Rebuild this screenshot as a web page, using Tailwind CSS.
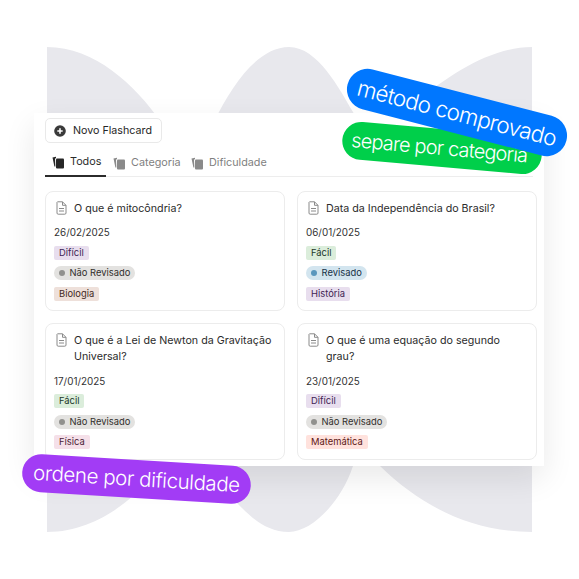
<!DOCTYPE html>
<html lang="en">
<head>
  <meta charset="UTF-8" />
  <title>Flashcards</title>
  <script src="https://cdn.jsdelivr.net/npm/@tailwindcss/browser@4"></script>
</head>
<body class="bg-white font-['Inter',sans-serif]">
  <div class="relative w-[579px] h-[579px] overflow-hidden pt-[113px] pl-[34px]">
    <!-- background shape -->
    <svg class="absolute left-0 top-0" width="579" height="579" viewBox="0 0 579 579">
      <rect x="47" y="47" width="485" height="485" fill="#e8e8ed" />
      <path fill="#ffffff" d="M47 47C95 47 135 85 161 122C172 138 180 152 188 170C194 152 203 138 214 122C232 85 258 47 289 47Z" />
      <path fill="#ffffff" d="M289 47C318 47 340 90 353 112C362 128 368 140 372 150C382 132 398 112 418 100C450 75 490 47 532 47Z" />
      <path fill="#ffffff" d="M47 532C85 532 115 512 134 495C150 482 165 462 178 440C195 462 215 482 237 503C250 516 265 532 289 532Z" />
      <path fill="#ffffff" d="M289 532C310 532 340 505 353 466C358 458 362 450 366 440C370 450 374 458 380 466C420 505 470 532 532 532Z" />
    </svg>

    <!-- panel -->
    <div class="relative w-[510px] h-[353px] bg-white shadow-[0_12px_30px_rgba(0,0,0,0.09)] px-[11px] pt-[5px]">
      <button class="flex items-center gap-[7px] w-[117px] h-[25px] pl-[8px] pt-[1px] bg-white border border-[#e9e9e9] rounded-[5px] text-[10.7px] text-[#262626]">
        <svg class="-mt-[1px]" width="12" height="12" viewBox="0 0 13 13">
          <circle cx="6.5" cy="6.5" r="6.3" fill="#3a3a3a" />
          <path d="M6.5 3.6v5.8M3.6 6.5h5.8" stroke="#fff" stroke-width="1.7" />
        </svg>
        Novo Flashcard
      </button>

      <!-- tabs -->
      <div class="flex h-[27px] mt-[7px] border-b border-[#ededed] text-[10.8px]">
        <div class="flex items-center gap-[5px] w-[61px] pl-[7px] border-b-2 border-[#2b2b2b] text-[#2b2b2b] -mb-px">
          <svg width="13" height="13" viewBox="0 0 13 13" fill="#262626">
            <path d="M0.5 1.5L4 0.8V2.2L3 2.4L3.4 10.5L2.4 10.4Z" />
            <rect x="4" y="2.5" width="8" height="10" rx="1" />
          </svg>
          Todos
        </div>
        <div class="flex items-center gap-[5px] ml-[5px] w-[80px] pl-[2px] text-[#7f7f7f]">
          <svg width="13" height="13" viewBox="0 0 13 13" fill="#8a8a8a">
            <path d="M0.5 1.5L4 0.8V2.2L3 2.4L3.4 10.5L2.4 10.4Z" />
            <rect x="4" y="2.5" width="8" height="10" rx="1" />
          </svg>
          Categoria
        </div>
        <div class="flex items-center gap-[5px] text-[#7f7f7f]">
          <svg width="13" height="13" viewBox="0 0 13 13" fill="#8a8a8a">
            <path d="M0.5 1.5L4 0.8V2.2L3 2.4L3.4 10.5L2.4 10.4Z" />
            <rect x="4" y="2.5" width="8" height="10" rx="1" />
          </svg>
          Dificuldade
        </div>
      </div>

      <!-- cards -->
      <div class="grid grid-cols-[240px_240px] gap-x-[12px] gap-y-[12px] mt-[14px]">
        <div class="h-[120px] border border-[#ececec] rounded-[8px] px-[8px] pt-[8px] bg-white">
          <div class="flex gap-[7px] text-[10.7px] leading-[16.5px] text-[#2b2b2b]">
            <svg class="shrink-0 mt-[1px] ml-[2px]" width="11" height="14" viewBox="0 0 11 14" fill="none" stroke="#8a8a8a" stroke-width="1">
              <path d="M1.5 0.8H6.5L10 4.3V12a1.2 1.2 0 0 1-1.2 1.2H2.2A1.2 1.2 0 0 1 1 12V1.3Z" />
              <path d="M6.5 0.8V4.3H10M3 7.5H8M3 10H8" />
            </svg>
            <p class="pt-[0.5px]">O que é mitocôndria?</p>
          </div>
          <p class="mt-[8px] text-[9.9px] leading-[15px] text-[#333333]">26/02/2025</p>
          <div class="flex flex-col items-start gap-[6.5px] mt-[5.5px] text-[9.4px] leading-[14px]">
            <span class="px-[5px] rounded-[2px] bg-[#e8deee] text-[#412454]">Difícil</span>
            <span class="flex items-center gap-[4.5px] px-[5px] rounded-full bg-[#e3e2e0] text-[#32302c]"><i class="w-[6px] h-[6px] rounded-full bg-[#91918e]"></i>Não Revisado</span>
            <span class="px-[5px] rounded-[2px] bg-[#eee0da] text-[#442a1e]">Biologia</span>
          </div>
        </div>

        <div class="h-[120px] border border-[#ececec] rounded-[8px] px-[8px] pt-[8px] bg-white">
          <div class="flex gap-[7px] text-[10.7px] leading-[16.5px] text-[#2b2b2b]">
            <svg class="shrink-0 mt-[1px] ml-[2px]" width="11" height="14" viewBox="0 0 11 14" fill="none" stroke="#8a8a8a" stroke-width="1">
              <path d="M1.5 0.8H6.5L10 4.3V12a1.2 1.2 0 0 1-1.2 1.2H2.2A1.2 1.2 0 0 1 1 12V1.3Z" />
              <path d="M6.5 0.8V4.3H10M3 7.5H8M3 10H8" />
            </svg>
            <p class="pt-[0.5px]">Data da Independência do Brasil?</p>
          </div>
          <p class="mt-[8px] text-[9.9px] leading-[15px] text-[#333333]">06/01/2025</p>
          <div class="flex flex-col items-start gap-[6.5px] mt-[5.5px] text-[9.4px] leading-[14px]">
            <span class="px-[5px] rounded-[2px] bg-[#dbeddb] text-[#1c3829]">Fácil</span>
            <span class="flex items-center gap-[4.5px] px-[5px] rounded-full bg-[#d3e5ef] text-[#183347]"><i class="w-[6px] h-[6px] rounded-full bg-[#5b97bd]"></i>Revisado</span>
            <span class="px-[5px] rounded-[2px] bg-[#e8deee] text-[#412454]">História</span>
          </div>
        </div>

        <div class="h-[137px] border border-[#ececec] rounded-[8px] px-[8px] pt-[8px] bg-white">
          <div class="flex gap-[7px] text-[10.7px] leading-[16.5px] text-[#2b2b2b]">
            <svg class="shrink-0 mt-[1px] ml-[2px]" width="11" height="14" viewBox="0 0 11 14" fill="none" stroke="#8a8a8a" stroke-width="1">
              <path d="M1.5 0.8H6.5L10 4.3V12a1.2 1.2 0 0 1-1.2 1.2H2.2A1.2 1.2 0 0 1 1 12V1.3Z" />
              <path d="M6.5 0.8V4.3H10M3 7.5H8M3 10H8" />
            </svg>
            <p class="pt-[0.5px]">O que é a Lei de Newton da Gravitação Universal?</p>
          </div>
          <p class="mt-[8px] text-[9.9px] leading-[15px] text-[#333333]">17/01/2025</p>
          <div class="flex flex-col items-start gap-[6.5px] mt-[5.5px] text-[9.4px] leading-[14px]">
            <span class="px-[5px] rounded-[2px] bg-[#dbeddb] text-[#1c3829]">Fácil</span>
            <span class="flex items-center gap-[4.5px] px-[5px] rounded-full bg-[#e3e2e0] text-[#32302c]"><i class="w-[6px] h-[6px] rounded-full bg-[#91918e]"></i>Não Revisado</span>
            <span class="px-[5px] rounded-[2px] bg-[#f5e0e9] text-[#4c2337]">Física</span>
          </div>
        </div>

        <div class="h-[137px] border border-[#ececec] rounded-[8px] px-[8px] pt-[8px] bg-white">
          <div class="flex gap-[7px] text-[10.7px] leading-[16.5px] text-[#2b2b2b]">
            <svg class="shrink-0 mt-[1px] ml-[2px]" width="11" height="14" viewBox="0 0 11 14" fill="none" stroke="#8a8a8a" stroke-width="1">
              <path d="M1.5 0.8H6.5L10 4.3V12a1.2 1.2 0 0 1-1.2 1.2H2.2A1.2 1.2 0 0 1 1 12V1.3Z" />
              <path d="M6.5 0.8V4.3H10M3 7.5H8M3 10H8" />
            </svg>
            <p class="pt-[0.5px]">O que é uma equação do segundo grau?</p>
          </div>
          <p class="mt-[8px] text-[9.9px] leading-[15px] text-[#333333]">23/01/2025</p>
          <div class="flex flex-col items-start gap-[6.5px] mt-[5.5px] text-[9.4px] leading-[14px]">
            <span class="px-[5px] rounded-[2px] bg-[#e8deee] text-[#412454]">Difícil</span>
            <span class="flex items-center gap-[4.5px] px-[5px] rounded-full bg-[#e3e2e0] text-[#32302c]"><i class="w-[6px] h-[6px] rounded-full bg-[#91918e]"></i>Não Revisado</span>
            <span class="px-[5px] rounded-[2px] bg-[#ffe2dd] text-[#5d1715]">Matemática</span>
          </div>
        </div>
      </div>
    </div>

    <!-- floating labels -->
    <div class="absolute left-[342px] top-[129px] w-[200px] h-[38px] rotate-[5deg] rounded-full bg-[#00cf4a] text-white text-[20px] font-[350] tracking-[-0.04em] leading-[38px] pl-[9px] whitespace-nowrap">separe por categoria</div>
    <div class="absolute left-[344px] top-[92px] w-[226px] h-[41px] rotate-[14.5deg] rounded-full bg-[#0077ff] text-white text-[22.5px] font-[350] tracking-[-0.032em] leading-[41px] text-center whitespace-nowrap">método comprovado</div>
    <div class="absolute left-[22px] top-[460px] w-[229px] h-[38px] rotate-[3.5deg] rounded-full bg-[#a23cf5] text-white text-[20.5px] font-[350] tracking-[-0.02em] leading-[38px] text-center whitespace-nowrap">ordene por dificuldade</div>
  </div>
</body>
</html>
